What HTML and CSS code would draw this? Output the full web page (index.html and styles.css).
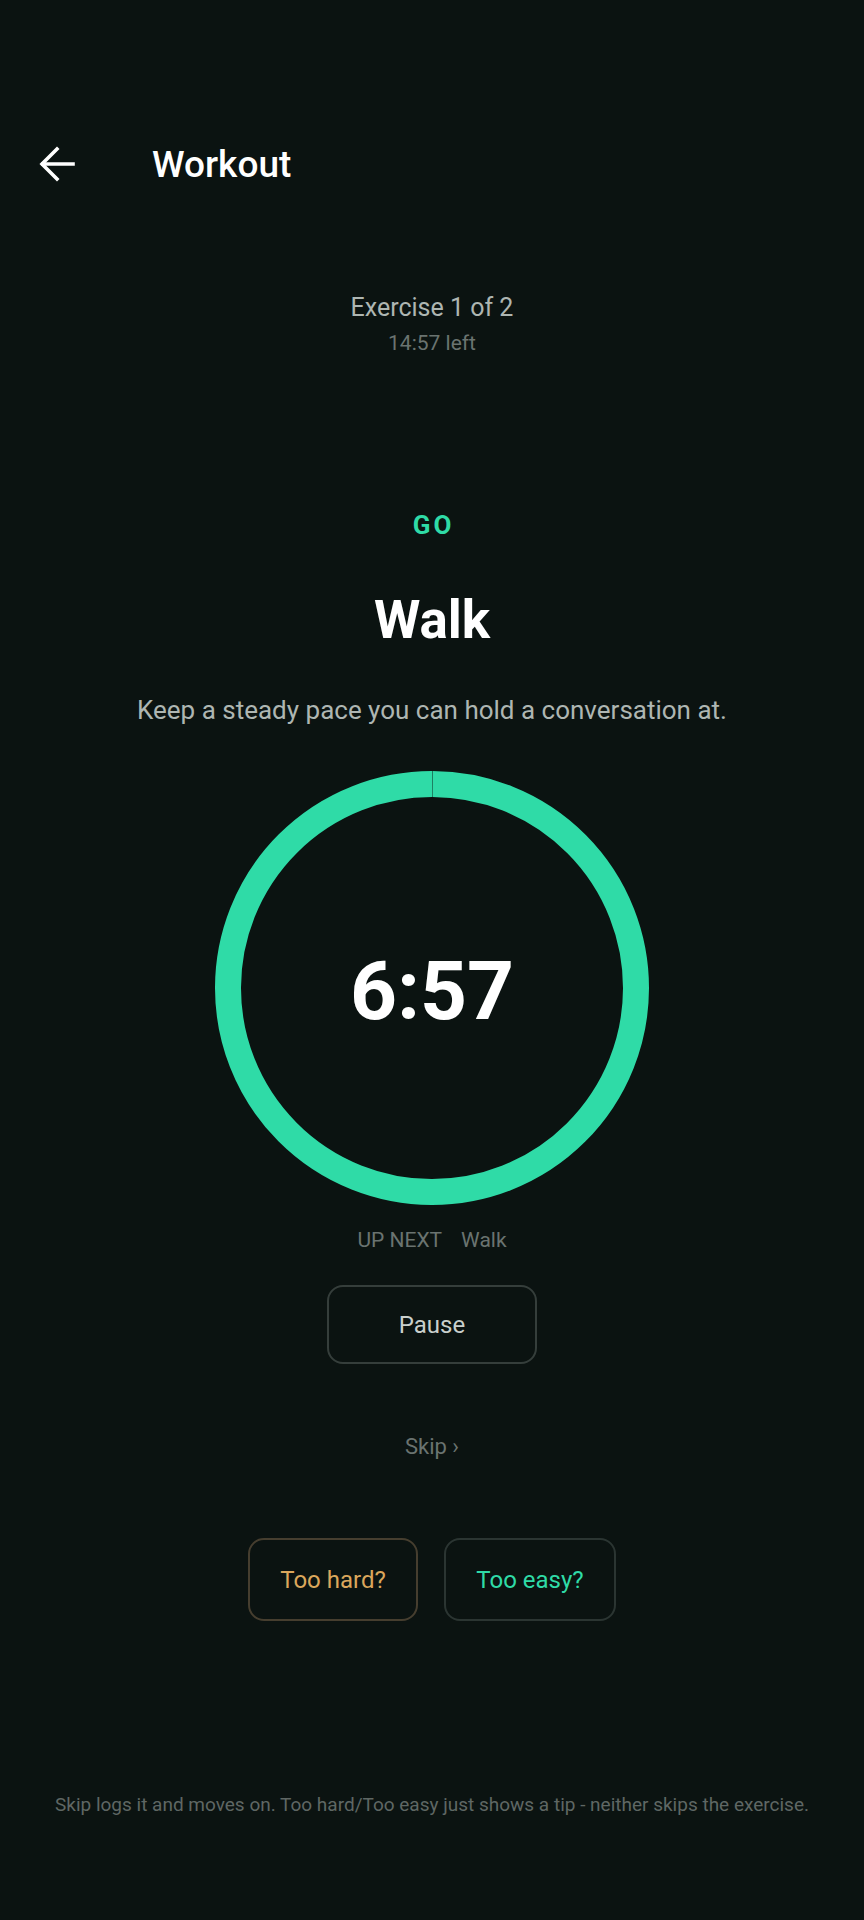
FILE: index.html
```html
<!DOCTYPE html>
<html lang="en">
<head>
<meta charset="utf-8">
<title>Workout</title>
<link rel="stylesheet" href="styles.css">
</head>
<body>
<div class="app">
  <header class="topbar">
    <button class="back" aria-label="Back">
      <svg width="40" height="40" viewBox="0 0 40 40" fill="none" stroke="#ffffff" stroke-width="3.6" stroke-linecap="square" stroke-linejoin="miter">
        <path d="M36 20 H6"/>
        <path d="M20 5 L5 20 L20 35"/>
      </svg>
    </button>
    <h1 class="title">Workout</h1>
  </header>

  <section class="progress">
    <div class="progress-count">Exercise 1 of 2</div>
    <div class="progress-left">14:57 left</div>
  </section>

  <div class="phase">GO</div>
  <h2 class="exercise">Walk</h2>
  <p class="desc">Keep a steady pace you can hold a conversation at.</p>

  <div class="ring">
    <svg class="ring-svg" width="434" height="434" viewBox="0 0 434 434">
      <circle cx="217" cy="217" r="204" fill="none" stroke="#2fdba7" stroke-width="26"
        stroke-dasharray="1280.8 0.9" transform="rotate(-89.85 217 217)"/>
    </svg>
    <div class="time">6:57</div>
  </div>

  <div class="next"><span>UP NEXT</span><span>Walk</span></div>

  <button class="pause">Pause</button>

  <div class="skip">Skip ›</div>

  <div class="adjust">
    <button class="adj hard">Too hard?</button>
    <button class="adj easy">Too easy?</button>
  </div>

  <p class="note">Skip logs it and moves on. Too hard/Too easy just shows a tip - neither skips the exercise.</p>
</div>
</body>
</html>
```

FILE: styles.css
```css
html, body {
  margin: 0;
  padding: 0;
  background: #0b1311;
}

body {
  font-family: Roboto, "Noto Sans", "Liberation Sans", sans-serif;
  color: #ffffff;
}

.app {
  width: 864px;
  min-height: 1920px;
  display: flex;
  flex-direction: column;
  align-items: center;
}

.topbar {
  align-self: stretch;
  box-sizing: border-box;
  height: 220px;
  padding-top: 108px;
  display: flex;
  align-items: center;
}

.topbar > * {
  height: 112px;
}

.back {
  background: none;
  border: 0;
  padding: 0;
  margin-left: 37px;
  width: 40px;
  display: flex;
  align-items: center;
  justify-content: center;
}

.title {
  margin: 0 0 0 75px;
  font-size: 37px;
  font-weight: 500;
  display: flex;
  align-items: center;
  color: #ffffff;
}

.progress {
  margin-top: 73px;
  display: flex;
  flex-direction: column;
  align-items: center;
}

.progress-count {
  font-size: 25px;
  line-height: 30px;
  color: #aeb6b2;
}

.progress-left {
  margin-top: 7px;
  font-size: 21px;
  line-height: 26px;
  color: #6a7370;
}

.phase {
  margin-top: 153px;
  font-size: 26px;
  line-height: 32px;
  font-weight: 700;
  letter-spacing: 3px;
  padding-left: 3px;
  color: #2fdba7;
}

.exercise {
  margin: 47px 0 0;
  font-size: 53px;
  line-height: 64px;
  font-weight: 700;
  color: #ffffff;
}

.desc {
  margin: 42px 0 0;
  font-size: 26px;
  line-height: 32px;
  color: #aeb6b2;
}

.ring {
  margin-top: 45px;
  width: 434px;
  height: 434px;
  display: grid;
  place-items: center;
}

.ring > * {
  grid-area: 1 / 1;
}

.time {
  font-size: 82px;
  font-weight: 700;
  line-height: 1;
  color: #ffffff;
  margin-top: 6px;
}

.next {
  margin-top: 22px;
  display: flex;
  gap: 19px;
  font-size: 21px;
  line-height: 27px;
  color: #6a7370;
}

.pause {
  margin-top: 31px;
  width: 210px;
  height: 79px;
  box-sizing: border-box;
  border: 2px solid #353e3b;
  border-radius: 16px;
  background: transparent;
  color: #c9cfcc;
  font-family: inherit;
  font-size: 24px;
}

.skip {
  margin-top: 69px;
  font-size: 22px;
  line-height: 28px;
  color: #6a7370;
}

.adjust {
  margin-top: 77px;
  display: flex;
  gap: 26px;
}

.adj {
  height: 83px;
  box-sizing: border-box;
  border-radius: 16px;
  background: transparent;
  font-family: inherit;
  font-size: 24px;
}

.hard {
  width: 170px;
  border: 2px solid #463e2f;
  color: #dba75c;
}

.easy {
  width: 172px;
  border: 2px solid #2b3532;
  color: #2fdba7;
}

.note {
  margin: 171px 0 0;
  font-size: 19px;
  line-height: 25px;
  color: #5f6764;
}
```
